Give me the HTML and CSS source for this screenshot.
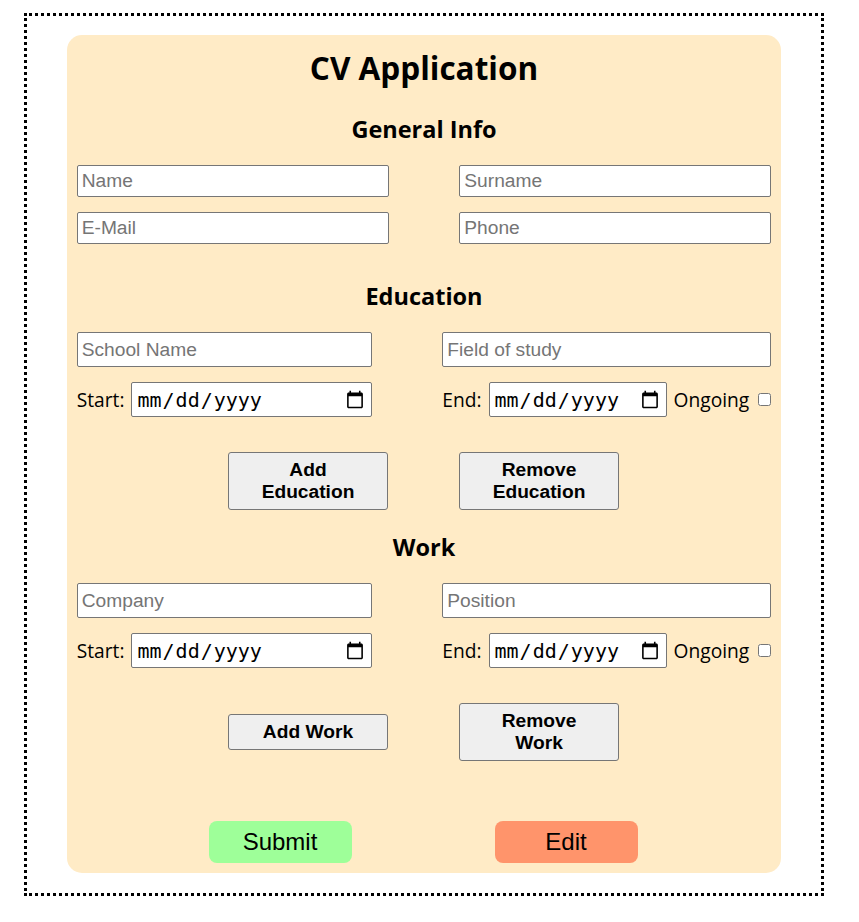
FILE: index.html
```html
<!DOCTYPE html>
<html lang="en">
<head>
<meta charset="utf-8">
<title>CV Application</title>
<link rel="stylesheet" href="styles.css">
</head>
<body>
<div class="page">
  <main class="card">
    <h1 class="title">CV Application</h1>

    <section class="section section-general">
      <h2 class="section-title">General Info</h2>
      <div class="general-grid">
        <input class="text-input general-input" type="text" placeholder="Name">
        <input class="text-input general-input" type="text" placeholder="Surname">
        <input class="text-input general-input" type="email" placeholder="E-Mail">
        <input class="text-input general-input" type="tel" placeholder="Phone">
      </div>
    </section>

    <section class="section section-education">
      <h2 class="section-title">Education</h2>
      <div class="entry-grid">
        <input class="text-input entry-input" type="text" placeholder="School Name">
        <input class="text-input entry-input" type="text" placeholder="Field of study">
        <div class="date-row">
          <label class="field-label">Start:</label>
          <input class="date-input" type="date">
        </div>
        <div class="date-row">
          <label class="field-label">End:</label>
          <input class="date-input" type="date">
          <label class="field-label">Ongoing</label>
          <input class="check" type="checkbox">
        </div>
      </div>
      <div class="btn-row">
        <button class="action-btn" type="button">Add Education</button>
        <button class="action-btn" type="button">Remove Education</button>
      </div>
    </section>

    <section class="section section-work">
      <h2 class="section-title">Work</h2>
      <div class="entry-grid">
        <input class="text-input entry-input" type="text" placeholder="Company">
        <input class="text-input entry-input" type="text" placeholder="Position">
        <div class="date-row">
          <label class="field-label">Start:</label>
          <input class="date-input" type="date">
        </div>
        <div class="date-row">
          <label class="field-label">End:</label>
          <input class="date-input" type="date">
          <label class="field-label">Ongoing</label>
          <input class="check" type="checkbox">
        </div>
      </div>
      <div class="btn-row">
        <button class="action-btn" type="button">Add Work</button>
        <button class="action-btn" type="button">Remove Work</button>
      </div>
    </section>

    <div class="final-row">
      <button class="final-btn submit-btn" type="button">Submit</button>
      <button class="final-btn edit-btn" type="button">Edit</button>
    </div>
  </main>
</div>
</body>
</html>
```

FILE: styles.css
```css
* {
  box-sizing: border-box;
}

body {
  margin: 0;
  font-family: "Open Sans", "DejaVu Sans", sans-serif;
  color: #000;
  background: #fff;
}

.page {
  width: 800px;
  margin: 13px 0 0 24px;
  border: 3px dotted #000;
  padding: 19px 0 20px;
}

.card {
  width: 90%;
  margin: 0 auto;
  background: #ffebc6;
  border-radius: 15px;
  padding: 11px 10px 10px;
}

.title {
  margin: 0;
  font-size: 31.5px;
  line-height: 44px;
  font-weight: 700;
  text-align: center;
}

.section-title {
  margin: 0;
  font-size: 23.5px;
  line-height: 33px;
  font-weight: 700;
  text-align: center;
}

.section-general .section-title {
  margin-top: 23px;
}

.section-education .section-title {
  margin-top: 36px;
}

.section-work .section-title {
  margin-top: 21px;
}

.general-grid {
  margin-top: 19px;
  display: grid;
  grid-template-columns: 312px 312px;
  justify-content: space-between;
  row-gap: 15px;
}

.text-input {
  display: block;
  width: 100%;
  border: 1px solid #767676;
  border-radius: 2px;
  background: #fff;
  padding: 0 4px;
  font-family: "Liberation Sans", Arial, sans-serif;
  font-size: 19.2px;
  color: #000;
  margin: 0;
}

.text-input::placeholder {
  color: #757575;
}

.general-input {
  height: 32px;
}

.entry-grid {
  margin-top: 19px;
  display: grid;
  grid-template-columns: 295px 329px;
  justify-content: space-between;
  row-gap: 15px;
}

.entry-input {
  height: 35px;
}

.date-row {
  display: flex;
  align-items: center;
  gap: 7px;
  height: 35px;
}

.field-label {
  font-size: 19.2px;
  line-height: 1;
  white-space: nowrap;
}

.date-input {
  flex: 1;
  min-width: 0;
  height: 35px;
  margin: 0;
  border: 1px solid #767676;
  border-radius: 2px;
  background: #fff;
  padding: 0 4px;
  font-family: "DejaVu Sans Mono", monospace;
  font-size: 20px;
  color: #000;
}

.check {
  width: 13px;
  height: 13px;
  margin: 0 0 0 2px;
}

.btn-row {
  margin-top: 35px;
  display: flex;
  justify-content: center;
  align-items: center;
  gap: 71px;
  padding-right: 1px;
}

.action-btn {
  width: 160px;
  padding: 6px 20px;
  border: 1px solid #767676;
  border-radius: 3px;
  background: #efefef;
  font-family: "Liberation Sans", Arial, sans-serif;
  font-size: 19.2px;
  line-height: 22px;
  font-weight: 700;
  color: #000;
}

.final-row {
  margin-top: 60px;
  display: flex;
  justify-content: center;
  gap: 143px;
  padding-right: 2px;
}

.final-btn {
  width: 143px;
  height: 42px;
  border: none;
  border-radius: 8px;
  font-family: "Liberation Sans", Arial, sans-serif;
  font-size: 24px;
  color: #000;
  padding: 0;
}

.submit-btn {
  background: #9eff99;
}

.edit-btn {
  background: #ff946b;
}
```
